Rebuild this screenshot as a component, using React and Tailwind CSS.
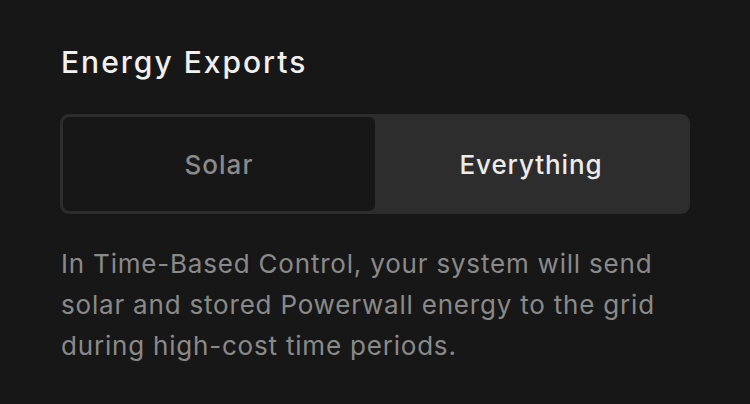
export default function App() {
  return (
    <div
      className="w-[750px] h-[404px] bg-[#171717] px-[61px] pt-[44px]"
      style={{ fontFamily: "Inter, 'Noto Sans', sans-serif" }}
    >
      <h1 className="text-[30px] leading-[36px] font-medium tracking-[2px] text-[#f0f0f0]">Energy Exports</h1>
      <div className="mt-[34px] w-[630px] h-[100px] -ml-px flex rounded-[9px] bg-[#2d2d2d] p-[3px]">
        <button className="flex-1 rounded-[6px] bg-[#171717] text-[26px] font-medium tracking-[1px] text-[#8a8a8a]">
          Solar
        </button>
        <button className="flex-1 rounded-[6px] text-[26px] font-medium tracking-[0.9px] text-[#ececec]">
          Everything
        </button>
      </div>
      <p className="mt-[29px] text-[26px] leading-[41px] tracking-[0.8px] text-[#8a8a8a]">
        In Time-Based Control, your system will send solar and stored Powerwall energy to the grid
        during high-cost time periods.
      </p>
    </div>
  );
}
